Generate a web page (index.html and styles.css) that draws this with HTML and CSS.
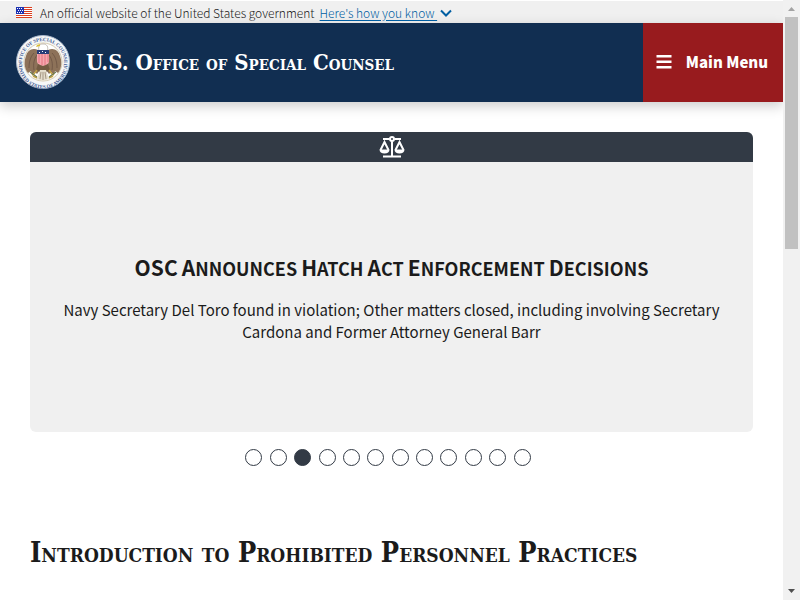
FILE: index.html
```html
<!DOCTYPE html>
<html lang="en">
<head>
	<meta charset="utf-8">
	<meta name="viewport" content="width=device-width, initial-scale=1">
	<title>U.S. Office of Special Counsel</title>
	<link rel="stylesheet" href="styles.css">
</head>
<body>
	<div class="page">
		<div class="banner">
			<svg class="flag" viewBox="0 0 16 11" shape-rendering="crispEdges" aria-hidden="true">
				<path fill="#fff" d="M0 0h16v11H0z"/>
				<path fill="#db3e1f" d="M0 0h16v1H0zM0 2h16v1H0zM0 4h16v1H0zM0 6h16v1H0zM0 8h16v1H0zM0 10h16v1H0z"/>
				<path fill="#1e33b1" d="M0 0h8v7H0z"/>
				<path fill="#fff" d="M1 1h1v1H1zM3 1h1v1H3zM5 1h1v1H5zM2 3h1v1H2zM4 3h1v1H4zM6 3h1v1H6zM1 5h1v1H1zM3 5h1v1H3zM5 5h1v1H5z"/>
			</svg>
			<span>An official website of the United States government</span>
			<button class="bannerBtn" type="button"><span>Here's how you know&nbsp;</span>
				<svg class="chevron" viewBox="0 0 12 8" aria-hidden="true"><path d="M1 1.500l5 5 5-5"/></svg>
			</button>
		</div>

		<header class="header">
			<a class="brand" href="#">
				<svg class="seal" viewBox="0 0 54 54" aria-hidden="true">
					<defs>
						<path id="sealTop" d="M8.500 37A21 21 0 1 1 45.500 37"/>
						<path id="sealBottom" d="M2.500 29A24.500 24.500 0 0 0 51.500 29"/>
					</defs>
					<circle cx="27" cy="27" r="26.500" fill="#f6f7f7" stroke="#a9b8cd"/>
					<circle cx="27" cy="27" r="19" fill="#fff" stroke="#c4b48e" stroke-width=".7"/>
					<text class="sealText"><textPath href="#sealTop" startOffset="50%">OFFICE OF SPECIAL COUNSEL</textPath></text>
					<text class="sealText"><textPath href="#sealBottom" startOffset="50%">UNITED STATES OF AMERICA</textPath></text>
					<!-- wings -->
					<path fill="#8d7259" d="M22 15c-6-3-11 1-12 6-2 5-2 12 2 17l3-2 1 4 3-3 2 2 3-4 1-13z"/>
					<path fill="#8d7259" d="M32 15c6-3 11 1 12 6 2 5 2 12-2 17l-3-2-1 4-3-3-2 2-3-4-1-13z"/>
					<path fill="none" stroke="#60483a" stroke-width=".6" d="M18 18c-4 4-5 10-5 15M21 20c-3 4-4 9-3 15M36 18c4 4 5 10 5 15M33 20c3 4 4 9 3 15"/>
					<!-- body and tail -->
					<path fill="#735b42" d="M22 29h10l2 6-4 2-3 5-3-5-4-2z"/>
					<path fill="#e4ddcc" d="M24 35h6l3 9-6 2-6-2z"/>
					<path fill="none" stroke="#8a7762" stroke-width=".7" d="M25 37l-1 7M27 37v8M29 37l1 7"/>
					<!-- head -->
					<path fill="#fff" stroke="#918577" stroke-width=".5" d="M23 16c-1-4 0-7 4-7 4 0 6 3 4 7z"/>
					<path fill="#d9bd35" d="M24 9l-3 1-1 2 4-1z"/>
					<!-- talons -->
					<path fill="none" stroke="#c4a343" stroke-width="1.500" d="M21 35l-3 4-2 1M33 35l3 4 2 1M17 41l4 2M37 41l-4 2"/>
					<path fill="none" stroke="#6b7953" stroke-width="1.200" d="M14 37l7 5M40 37l-7 5"/>
					<!-- shield -->
					<path fill="#f5a7ae" d="M21 18h12v8c0 3-3 4-6 5-3-1-6-2-6-5z"/>
					<path fill="none" stroke="#e06575" stroke-width=".8" d="M23 18v10M26 18v12M29 18v12M32 18v9"/>
					<path fill="#283d78" d="M21 15h12v4H21z"/>
					<path fill="#fff" d="M23 17h1v1h-1zM26 16h1v1h-1zM29 17h1v1h-1z"/>
				</svg>
				<span class="brandName">U.S. Office of Special Counsel</span>
			</a>
			<button class="menuBtn" type="button">
				<svg class="bars" viewBox="0 0 16 14" aria-hidden="true"><path d="M.5 0h15v2.500H.5zM.5 5.500h15V8H.5zM.5 11h15v2.500H.5z"/></svg>
				<span>Main Menu</span>
			</button>
		</header>

		<main class="main">
			<section class="card">
				<div class="cardBar">
					<svg class="scales" viewBox="0 0 26 22" aria-hidden="true">
						<path d="M4 3h6.500M15.500 3H22M13 5.500V20M4 20.500h18"/>
						<circle cx="13" cy="3" r="2"/>
						<path d="M1.500 14L5.500 6l4 8M16.500 14l4-8 4 8"/>
						<path class="pan" d="M.5 13.500h10c0 2.500-2 4-5 4s-5-1.500-5-4zM15.500 13.500h10c0 2.500-2 4-5 4s-5-1.500-5-4z"/>
					</svg>
				</div>
				<div class="cardBody">
					<h2 class="cardTitle"><span class="cap">OSC</span> <span class="cap">A</span>nnounces <span class="cap">H</span>atch <span class="cap">A</span>ct <span class="cap">E</span>nforcement <span class="cap">D</span>ecisions</h2>
					<p class="cardText">Navy Secretary Del Toro found in violation; Other matters closed, including involving Secretary Cardona and Former Attorney General Barr</p>
				</div>
			</section>
			<div class="dots">
				<button class="dot" type="button" aria-label="Slide 1"></button>
				<button class="dot" type="button" aria-label="Slide 2"></button>
				<button class="dot active" type="button" aria-label="Slide 3"></button>
				<button class="dot" type="button" aria-label="Slide 4"></button>
				<button class="dot" type="button" aria-label="Slide 5"></button>
				<button class="dot" type="button" aria-label="Slide 6"></button>
				<button class="dot" type="button" aria-label="Slide 7"></button>
				<button class="dot" type="button" aria-label="Slide 8"></button>
				<button class="dot" type="button" aria-label="Slide 9"></button>
				<button class="dot" type="button" aria-label="Slide 10"></button>
				<button class="dot" type="button" aria-label="Slide 11"></button>
				<button class="dot" type="button" aria-label="Slide 12"></button>
			</div>
			<h1 class="heading">Introduction to Prohibited Personnel Practices</h1>
		</main>
	</div>

	<div class="scrollbar" aria-hidden="true">
		<svg class="arrow" viewBox="0 0 17 17"><path fill="#a3a3a3" d="M5 11h7L8.500 7z"/></svg>
		<div class="track"><div class="thumb"></div></div>
		<svg class="arrow" viewBox="0 0 17 17"><path fill="#505050" d="M5 6h7l-3.500 4z"/></svg>
	</div>
</body>
</html>
```
FILE: styles.css
```css
*{box-sizing: border-box;}
body,h1,h2,p{margin: 0;}
body{
	display: flex;
	height: 100vh;
	overflow: hidden;
	background-color: #fff;
	color: #1b1b1b;
	font-family: "Noto Sans CJK SC", "Noto Sans", sans-serif;
	font-size: 15px;
}
button{
	border: 0;
	background: none;
	font-family: inherit;
	cursor: pointer;
}
.page{
	flex: 1;
	min-width: 0;
}

/* government banner */
.banner{
	display: flex;
	align-items: center;
	height: 23px;
	padding: 1px 16px 0;
	border-top: 1px solid #fff;
	background-color: #f0f0f0;
	font-size: 12px;
	line-height: 20px;
	font-weight: 300;
}
.flag{
	width: 16px;
	height: 11px;
	margin-right: 8px;
}
.bannerBtn{
	display: flex;
	align-items: center;
	gap: 3px;
	margin-left: 5px;
	padding: 0;
	color: #005ea2;
	font-size: 12px;
	line-height: 20px;
	font-weight: 300;
}
.bannerBtn span{
	text-decoration: underline;
	text-underline-offset: 2px;
}
.chevron{
	width: 12px;
	height: 8px;
	fill: none;
	stroke: #005ea2;
	stroke-width: 2;
}

/* header */
.header{
	display: flex;
	justify-content: space-between;
	height: 79px;
	background-color: #112e51;
	box-shadow: 0 4px 12px rgba(0,0,0,0.2);
}
.brand{
	display: flex;
	align-items: center;
	gap: 16px;
	padding: 0 0 1px 16px;
	color: #fff;
	text-decoration: none;
}
.seal{
	width: 54px;
	height: 54px;
}
.sealText{
	fill: #3c5892;
	font-family: "Liberation Serif", serif;
	font-size: 5px;
	font-weight: bold;
	text-anchor: middle;
}
.brandName{
	font-family: "DejaVu Serif Condensed", "DejaVu Serif", serif;
	font-size: 22px;
	line-height: 32px;
	font-weight: bold;
	font-variant: small-caps;
}
.menuBtn{
	display: flex;
	align-items: center;
	gap: 14px;
	padding: 0 15px 1px 13px;
	background-color: #981b1e;
	color: #fff;
	font-size: 15px;
	line-height: 24px;
	font-weight: 900;
}
.bars{
	width: 16px;
	height: 14px;
	fill: #fff;
}

/* slider */
.main{padding: 30px;}
.card{
	border-radius: 6px;
	overflow: hidden;
	background-color: #f0f0f0;
	text-align: center;
}
.cardBar{
	display: flex;
	align-items: center;
	justify-content: center;
	height: 30px;
	background-color: #323a45;
}
.scales{
	width: 26px;
	height: 22px;
	fill: none;
	stroke: #fff;
	stroke-width: 2;
}
.scales .pan{
	fill: #fff;
	stroke: none;
}
.cardBody{
	display: flex;
	flex-direction: column;
	justify-content: center;
	gap: 16px;
	min-height: 270px;
	padding: 0 24px;
}
.cardTitle{
	font-size: 18px;
	line-height: 30px;
	font-weight: bold;
	text-transform: uppercase;
}
.cap{font-size: 21px;}
.cardText{
	font-size: 15px;
	line-height: 22px;
}
.dots{
	padding: 13px 7px 0 0;
	line-height: 22px;
	text-align: center;
}
.dot{
	width: 17px;
	height: 17px;
	margin: 0 2px;
	padding: 0;
	border: 1px solid #323a45;
	border-radius: 50%;
	vertical-align: middle;
}
.dot.active{background-color: #323a45;}
.heading{
	margin-top: 66px;
	font-family: "DejaVu Serif Condensed", "DejaVu Serif", serif;
	font-size: 27px;
	line-height: 40px;
	font-weight: bold;
	font-variant: small-caps;
}

/* scrollbar */
.scrollbar{
	display: flex;
	flex-direction: column;
	width: 17px;
	background-color: #f1f1f1;
}
.arrow{
	width: 17px;
	height: 17px;
}
.track{
	flex: 1;
	padding: 0 2px;
}
.thumb{
	height: 41%;
	background-color: #c1c1c1;
}
```
